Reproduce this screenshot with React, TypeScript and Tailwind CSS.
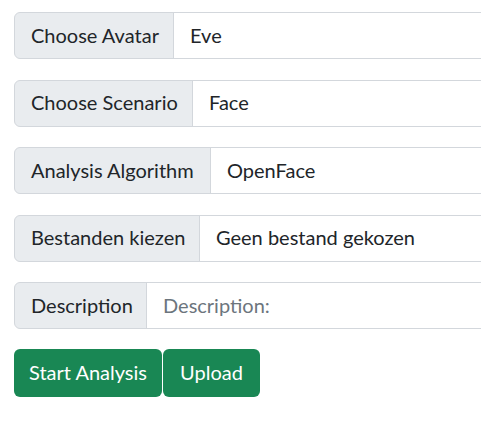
import React from "react";

const font = { fontFamily: 'Lato, "Open Sans", sans-serif' };

function Row({ label, value, placeholder, w, last }: { label: string; value?: string; placeholder?: string; w: number; last?: boolean }) {
  return (
    <div className={`flex h-[47px] w-[520px] ${last ? "mb-[20px]" : "mb-[20.5px]"}`}>
      <div
        className="flex items-center shrink-0 pl-[16px] pb-[2px] whitespace-nowrap bg-[#e9ecef] border border-[#d3d7dc] rounded-l-[6px] text-[#212529] text-[20px]"
        style={{ width: w }}
      >
        {label}
      </div>
      <div className="flex items-center flex-1 -ml-px px-[16px] pb-[2px] whitespace-nowrap bg-white border border-[#d3d7dc] text-[20px]">
        {value ? <span className="text-[#212529]">{value}</span> : <span className="text-[#6c757d]">{placeholder}</span>}
      </div>
    </div>
  );
}

export default function App() {
  return (
    <div className="w-[481px] h-[421px] overflow-hidden bg-white pl-[14px] pt-[12px]" style={font}>
      <Row label="Choose Avatar" value="Eve" w={160} />
      <Row label="Choose Scenario" value="Face" w={179} />
      <Row label="Analysis Algorithm" value="OpenFace" w={197} />
      <Row label="Bestanden kiezen" value="Geen bestand gekozen" w={186} />
      <Row label="Description" placeholder="Description:" w={133} last />
      <div className="flex mt-[1px]">
        <button className="h-[48px] w-[148px] pb-[2px] whitespace-nowrap bg-[#198754] text-white text-[20px] rounded-[6px] flex items-center justify-center">
          Start Analysis
        </button>
        <button className="h-[48px] w-[97px] ml-[1px] pb-[2px] whitespace-nowrap bg-[#198754] text-white text-[20px] rounded-[6px] flex items-center justify-center">
          Upload
        </button>
      </div>
    </div>
  );
}
